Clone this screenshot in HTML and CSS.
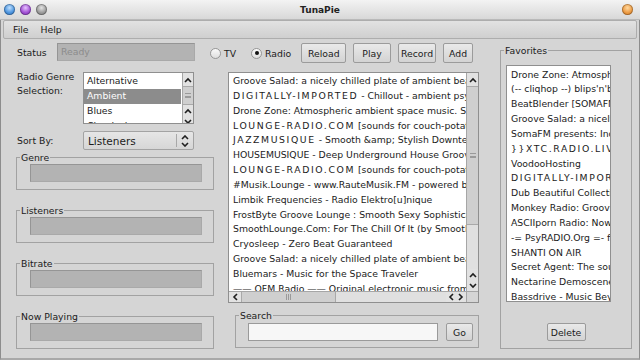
FILE: index.html
```html
<!DOCTYPE html>
<html>
<head>
  <title>TunaPie</title>
  <link rel="stylesheet" href="styles.css">
</head>
<body>
  <div class="titlebar">
    <div class="lights">
      <span class="light blue"></span>
      <span class="light purple"></span>
      <span class="light grey"></span>
    </div>
    <div class="title">TunaPie</div>
    <div class="lights right">
      <span class="light orange"></span>
    </div>
  </div>

  <div class="frame">
    <!-- Menu -->
    <div class="menubar">
      <span>File</span>
      <span>Help</span>
    </div>

    <div class="main">
      <!-- Left column: status, genre, info boxes -->
      <div class="left">
        <div class="row status-row">
          <span class="label status-label">Status</span>
          <div class="field status-field">Ready</div>
        </div>

        <div class="row genre-row">
          <span class="label wide-label two-lines">Radio Genre<br>Selection:</span>
          <div class="listbox genre-list">
            <div class="list-view">
              <div class="item">Alternative</div>
              <div class="item selected">Ambient</div>
              <div class="item">Blues</div>
              <div class="item">Classical</div>
            </div>
            <div class="vscroll small">
              <div class="sb-btn"><svg width="8" height="6" viewBox="0 0 8 6"><path d="M1 5L4 2L7 5" /></svg></div>
              <div class="sb-thumb"><span class="grip-h"></span></div>
              <div class="sb-track"></div>
              <div class="sb-btn"><svg width="8" height="6" viewBox="0 0 8 6"><path d="M1 5L4 2L7 5" /></svg></div>
              <div class="sb-btn"><svg width="8" height="6" viewBox="0 0 8 6"><path d="M1 1L4 4L7 1" /></svg></div>
            </div>
          </div>
        </div>

        <div class="row sort-row">
          <span class="label wide-label">Sort By:</span>
          <div class="combo">
            <span class="combo-text">Listeners</span>
            <span class="combo-arrows">
              <svg width="8" height="5" viewBox="0 0 8 5"><path d="M1 4L4 1L7 4" /></svg>
              <svg width="8" height="5" viewBox="0 0 8 5"><path d="M1 1L4 4L7 1" /></svg>
            </span>
          </div>
        </div>

        <fieldset class="group info-group first">
          <legend>Genre</legend>
          <div class="field info-field"></div>
        </fieldset>
        <fieldset class="group info-group">
          <legend>Listeners</legend>
          <div class="field info-field"></div>
        </fieldset>
        <fieldset class="group info-group">
          <legend>Bitrate</legend>
          <div class="field info-field"></div>
        </fieldset>
        <fieldset class="group info-group">
          <legend>Now Playing</legend>
          <div class="field info-field"></div>
        </fieldset>
      </div>

      <!-- Center column: controls, station list, search -->
      <div class="center">
        <div class="controls">
          <label class="radio"><span class="radio-dot"></span>TV</label>
          <label class="radio radio-on"><span class="radio-dot"></span>Radio</label>
          <button class="btn btn-reload">Reload</button>
          <button class="btn btn-play">Play</button>
          <button class="btn btn-record">Record</button>
          <button class="btn btn-add">Add</button>
        </div>

        <div class="listbox station-list">
          <div class="list-view">
            <div class="item">Groove Salad: a nicely chilled plate of ambient beats and grooves.</div>
            <div class="item"><span class="spaced">DIGITALLY-IMPORTED</span> - Chillout - ambient psy chillout</div>
            <div class="item">Drone Zone: Atmospheric ambient space music. Serve Best Chilled</div>
            <div class="item"><span class="spaced">LOUNGE-RADIO.COM</span> [sounds for couch-potatoes]</div>
            <div class="item"><span class="spaced">JAZZMUSIQUE</span> - Smooth &amp;amp; Stylish Downtempo</div>
            <div class="item">HOUSEMUSIQUE - Deep Underground House Groove</div>
            <div class="item"><span class="spaced">LOUNGE-RADIO.COM</span> [sounds for couch-potatoes]</div>
            <div class="item">#Musik.Lounge - www.RauteMusik.FM - powered by</div>
            <div class="item">Limbik Frequencies - Radio Elektro[u]nique</div>
            <div class="item">FrostByte Groove Lounge : Smooth Sexy Sophisticated</div>
            <div class="item">SmoothLounge.Com: For The Chill Of It (by SmoothLounge)</div>
            <div class="item">Cryosleep - Zero Beat Guaranteed</div>
            <div class="item">Groove Salad: a nicely chilled plate of ambient beats</div>
            <div class="item">Bluemars - Music for the Space Traveler</div>
            <div class="item">—— QFM Radio —— Original electronic music from</div>
          </div>
          <div class="vscroll">
            <div class="sb-btn"><svg width="8" height="6" viewBox="0 0 8 6"><path d="M1 5L4 2L7 5" /></svg></div>
            <div class="sb-thumb big"><span class="grip-h"></span></div>
            <div class="sb-track"></div>
            <div class="sb-btn"><svg width="8" height="6" viewBox="0 0 8 6"><path d="M1 5L4 2L7 5" /></svg></div>
            <div class="sb-btn"><svg width="8" height="6" viewBox="0 0 8 6"><path d="M1 1L4 4L7 1" /></svg></div>
          </div>
          <div class="hscroll">
            <div class="sb-btn"><svg width="6" height="8" viewBox="0 0 6 8"><path d="M5 1L2 4L5 7" /></svg></div>
            <div class="sb-thumb wide"><span class="grip-v"></span></div>
            <div class="sb-track"></div>
            <div class="sb-btn"><svg width="6" height="8" viewBox="0 0 6 8"><path d="M5 1L2 4L5 7" /></svg></div>
            <div class="sb-btn"><svg width="6" height="8" viewBox="0 0 6 8"><path d="M1 1L4 4L1 7" /></svg></div>
          </div>
          <div class="corner"></div>
        </div>

        <fieldset class="group search-group">
          <legend>Search</legend>
          <div class="search-row">
            <input type="text" class="search-input">
            <button class="btn btn-go">Go</button>
          </div>
        </fieldset>
      </div>

      <!-- Right column: favorites -->
      <fieldset class="group favorites">
        <legend>Favorites</legend>
        <div class="listbox fav-list">
          <div class="list-view">
            <div class="item">Drone Zone: Atmospheric ambient space music</div>
            <div class="item">(-- cliqhop --) blips'n'beeps</div>
            <div class="item">BeatBlender [SOMAFM] a late night blend</div>
            <div class="item">Groove Salad: a nicely chilled plate</div>
            <div class="item">SomaFM presents: Indie Pop Rocks</div>
            <div class="item"><span class="spaced">}}XTC.RADIO.LIVE</span></div>
            <div class="item">VoodooHosting</div>
            <div class="item"><span class="spaced">DIGITALLY-IMPORTED</span></div>
            <div class="item">Dub Beautiful Collective</div>
            <div class="item">Monkey Radio: Grooving</div>
            <div class="item">ASCIIporn Radio: Now playing</div>
            <div class="item">-= PsyRADIO.Org =- fine</div>
            <div class="item">SHANTI ON AIR</div>
            <div class="item">Secret Agent: The soundtrack</div>
            <div class="item">Nectarine Demoscene Radio</div>
            <div class="item">Bassdrive - Music Beyond</div>
          </div>
        </div>
        <button class="btn btn-delete">Delete</button>
      </fieldset>
    </div>
  </div>
</body>
</html>
```

FILE: styles.css
```css
/* Base */
* {
  box-sizing: border-box;
}

body {
  margin: 0;
  width: 640px;
  height: 360px;
  overflow: hidden;
  font-family: "DejaVu Sans", sans-serif;
  font-size: 9.3px;
  color: #1b1b1b;
  background: #d5d5d5;
}

/* Title bar */
.titlebar {
  height: 20px;
  display: grid;
  grid-template-columns: 1fr auto 1fr;
  align-items: center;
  background: linear-gradient(#f3f3f3, #d8d8d8);
  border-bottom: 1px solid #b9b9b9;
}

.title {
  font-weight: bold;
  font-size: 9px;
  color: #222;
}

.lights {
  display: flex;
  gap: 5px;
  padding-left: 4px;
}

.lights.right {
  justify-content: flex-end;
  padding-right: 7px;
}

.light {
  width: 11px;
  height: 11px;
  border-radius: 50%;
  box-shadow: inset 0 0 0 1px rgba(0, 0, 0, 0.25);
}

.blue {
  background: radial-gradient(circle at 50% 35%, #bfe0ff 0, #4c94de 55%, #2f6fb8 100%);
}

.purple {
  background: radial-gradient(circle at 50% 35%, #e6c2ff 0, #a04fd4 55%, #7a34a8 100%);
}

.grey {
  background: radial-gradient(circle at 50% 35%, #e4e4e4 0, #9a9a9a 55%, #777 100%);
}

.orange {
  background: radial-gradient(circle at 50% 35%, #ffd9a0 0, #ec9a42 55%, #c87422 100%);
}

/* Frame */
.frame {
  height: 340px;
  border-left: 1px solid #8d8d8d;
  border-right: 1px solid #8d8d8d;
  border-bottom: 2px solid #a9a9a9;
}

.menubar {
  height: 19px;
  margin: 0 2px;
  display: flex;
  align-items: center;
  gap: 12px;
  padding-left: 9px;
  background: linear-gradient(#e2e2e2, #cfcfcf);
  border: 1px solid #adadad;
  border-radius: 2px;
}

.main {
  display: flex;
  padding: 4px 7px 0 15px;
}

/* Left column */
.left {
  width: 198px;
  flex: 0 0 198px;
}

.row {
  display: flex;
}

.label {
  padding-left: 1px;
}

.status-row {
  height: 18px;
  align-items: center;
}

.status-label {
  width: 41px;
}

.wide-label {
  width: 67px;
  flex: 0 0 67px;
}

.two-lines {
  line-height: 14px;
  margin-top: -2px;
}

.field {
  background: #b3b3b3;
  border: 1px solid #959595;
  border-right-color: #a9a9a9;
  border-bottom-color: #a9a9a9;
}

.status-field {
  width: 138px;
  height: 18px;
  padding-left: 3px;
  line-height: 16px;
  color: #8c8c8c;
}

.genre-row {
  margin-top: 11px;
}

.sort-row {
  margin-top: 7px;
  align-items: center;
}

/* Fieldsets */
.group {
  margin: 0;
  min-width: 0;
  border: 1px solid #a2a2a2;
  padding: 0 0 7px 3px;
}

.group legend {
  padding: 0 1px;
  line-height: 11px;
}

.info-group {
  margin-top: 15px;
}

.info-group.first {
  margin-top: 2px;
}

.info-field {
  margin: 1px 0 0 10px;
  width: 172px;
  height: 18px;
}

/* List boxes */
.listbox {
  background: #fff;
  border: 1px solid #8f8f8f;
  display: grid;
  overflow: hidden;
}

.list-view {
  overflow: hidden;
  padding-top: 1px;
  min-width: 0;
}

.item {
  height: 14.85px;
  line-height: 14.85px;
  padding-left: 3px;
  white-space: nowrap;
}

.item.selected {
  background: #8c8c8c;
  color: #fff;
  margin-right: 1px;
}

.spaced {
  letter-spacing: 1.6px;
}

.genre-list {
  width: 111px;
  height: 52px;
  grid-template-columns: 1fr 11px;
}

.station-list {
  margin: 9px 0 0 14px;
  width: 251px;
  height: 231px;
  grid-template-columns: 1fr 12px;
  grid-template-rows: 1fr 11px;
}

.station-list .list-view {
  padding-left: 1px;
}

.fav-list {
  margin: 9px 0 0 2px;
  width: 105px;
  height: 237px;
  grid-template-columns: 1fr;
}

.fav-list .list-view {
  padding-top: 1.5px;
}

.fav-list .item {
  padding-left: 4px;
}

/* Scrollbars */
.vscroll {
  display: flex;
  flex-direction: column;
  background: #dcdcdc;
  border-left: 1px solid #a6a6a6;
}

.hscroll {
  display: flex;
  background: #dcdcdc;
  border-top: 1px solid #a6a6a6;
}

.corner {
  background: #d5d5d5;
  border-top: 1px solid #a6a6a6;
  border-left: 1px solid #a6a6a6;
}

.sb-btn {
  display: flex;
  align-items: center;
  justify-content: center;
  height: 11px;
  flex: 0 0 auto;
  background: #e2e2e2;
}

.hscroll .sb-btn {
  height: auto;
  width: 10px;
}

.hscroll .sb-btn:first-child {
  width: 12px;
}

.sb-btn svg path,
.combo-arrows svg path {
  fill: none;
  stroke: #1f1f1f;
  stroke-width: 1.6;
}

.vscroll .sb-btn:first-child {
  height: 13px;
}

.sb-thumb {
  display: flex;
  align-items: center;
  justify-content: center;
  height: 19px;
  background: #cfcfcf;
  border-top: 1px solid #a9a9a9;
  border-bottom: 1px solid #a9a9a9;
}

.sb-thumb.big {
  height: 139px;
}

.sb-thumb.wide {
  height: auto;
  width: 95px;
  border: none;
  border-left: 1px solid #a9a9a9;
  border-right: 1px solid #a9a9a9;
}

.sb-track {
  flex: 1;
  background: #e0e0e0;
}

.grip-h {
  width: 6px;
  height: 5px;
  border-top: 1px solid #9a9a9a;
  border-bottom: 1px solid #9a9a9a;
  background: linear-gradient(transparent 2px, #9a9a9a 2px, #9a9a9a 3px, transparent 3px);
}

.grip-v {
  width: 5px;
  height: 6px;
  border-left: 1px solid #9a9a9a;
  border-right: 1px solid #9a9a9a;
  background: linear-gradient(90deg, transparent 1px, #9a9a9a 1px, #9a9a9a 2px, transparent 2px);
}

/* Combo box */
.combo {
  width: 111px;
  height: 19px;
  display: flex;
  align-items: center;
  background: linear-gradient(#e6e6e6, #d6d6d6);
  border: 1px solid #a3a3a3;
  border-radius: 2px;
}

.combo-text {
  flex: 1;
  padding-left: 4px;
  font-size: 10.5px;
}

.combo-arrows {
  width: 17px;
  height: 13px;
  border-left: 1px solid #a8a8a8;
  display: flex;
  flex-direction: column;
  align-items: center;
  justify-content: center;
  gap: 2px;
}

/* Center column */
.center {
  width: 266px;
  flex: 0 0 266px;
}

.controls {
  height: 20px;
  margin-left: -4px;
  display: flex;
  align-items: center;
}

.radio {
  display: flex;
  align-items: center;
  gap: 3px;
  margin-right: 15px;
}

.radio-on {
  margin-right: 10px;
}

.radio-dot {
  width: 11px;
  height: 11px;
  border-radius: 50%;
  border: 1px solid #969696;
  background: linear-gradient(#fafafa, #dedede);
  display: flex;
  align-items: center;
  justify-content: center;
}

.radio-on .radio-dot::after {
  content: "";
  width: 4px;
  height: 4px;
  border-radius: 50%;
  background: #111;
}

.btn {
  height: 20px;
  padding: 0;
  font-family: "DejaVu Sans", sans-serif;
  font-size: 9.3px;
  color: #1b1b1b;
  background: linear-gradient(#e9e9e9, #d3d3d3);
  border: 1px solid #9b9b9b;
  border-radius: 2px;
}

.controls .btn {
  margin-right: 7px;
}

.btn-reload { width: 47px; }
.btn-play { width: 39px; }
.btn-record { width: 40px; }
.btn-add { width: 31px; margin-right: 0; }

.search-group {
  margin: 7px 0 0 21px;
  width: 244px;
  padding-bottom: 6px;
}

.search-row {
  display: flex;
  margin: 2px 0 0 9px;
}

.search-input {
  width: 190px;
  height: 18px;
  margin: 0;
  border: 1px solid #9a9a9a;
  background: #f7f7f7;
}

.btn-go {
  width: 27px;
  height: 18px;
  margin-left: 8px;
}

/* Favorites */
.favorites {
  margin: 2px 0 0 20px;
  width: 132px;
  flex: 0 0 132px;
  padding: 0 3px 6px 3px;
  display: flex;
  flex-direction: column;
  align-items: flex-start;
}

.btn-delete {
  align-self: center;
  margin-top: 21px;
  width: 39px;
  height: 18px;
}
```
